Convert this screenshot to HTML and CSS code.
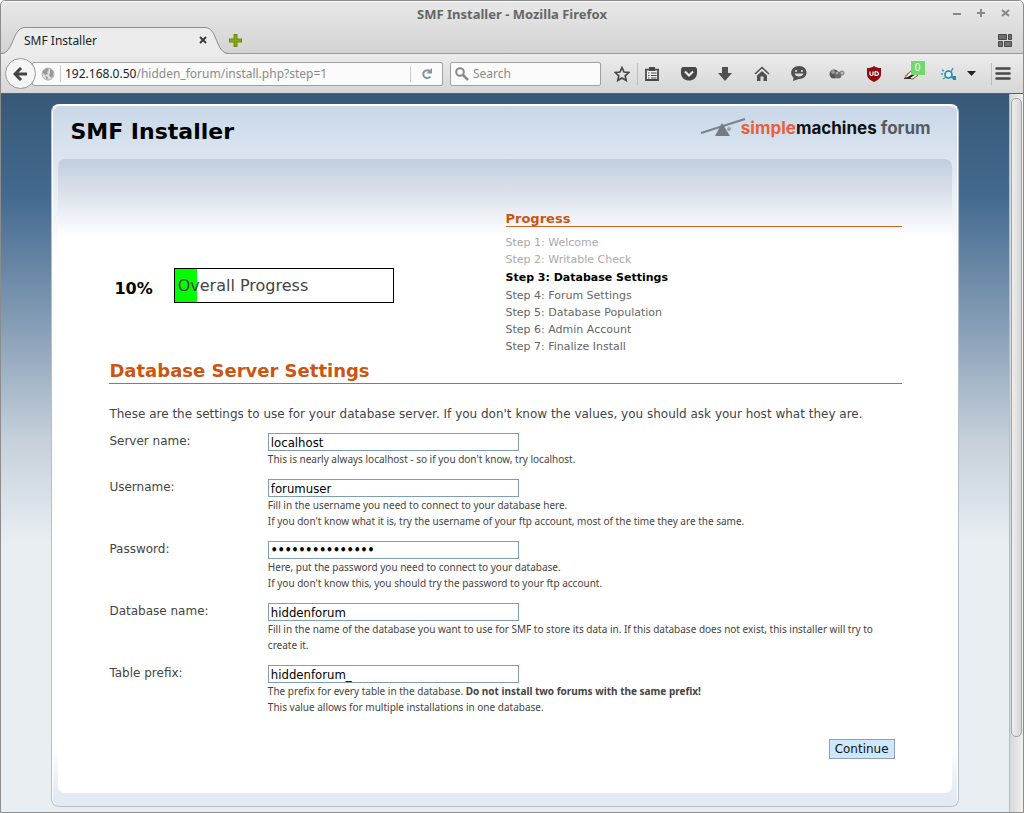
FILE: index.html
```html
<!DOCTYPE html>
<html lang="en">
<head>
<meta charset="utf-8">
<title>SMF Installer</title>
<link rel="stylesheet" href="styles.css">
</head>
<body>
<div class="window">
  <header class="titlebar">
    <div class="caption">SMF Installer - Mozilla Firefox</div>
    <div class="controls">
      <button aria-label="Minimize"><svg width="9" height="9"><path d="M0 5h8" stroke="#888" stroke-width="2"/></svg></button>
      <button aria-label="Maximize"><svg width="9" height="9"><path d="M0 4h8M4 0v8" stroke="#888" stroke-width="2"/></svg></button>
      <button aria-label="Close"><svg width="9" height="9"><path d="M1 1l7 6M8 1L1 7" stroke="#888" stroke-width="2"/></svg></button>
    </div>
  </header>
  <div class="tabs">
    <div class="tab">
      <svg class="tab-shape" width="228" height="28" viewBox="0 0 228 28"><path d="M0 27C13 27 11 1 24 1H204C217 1 214 27 228 27V28H0z" fill="#ececec"/><path d="M0 26.500C13 26.500 11 .5 24 .5H204C217 .5 214 26.500 228 26.500" fill="none" stroke="#8d8d8d"/></svg>
      <span class="tab-title">SMF Installer</span>
      <button class="tab-close" aria-label="Close tab"><svg width="8" height="8"><path d="M1 1l6 6M7 1L1 7" stroke="#3c3c3c" stroke-width="2"/></svg></button>
    </div>
    <button class="tab-new" aria-label="New tab"><svg width="13" height="13"><path d="M6.500 0v13M0 6.500h13" stroke="#6d8a0a" stroke-width="4"/><path d="M6.500 1v11M1 6.500h11" stroke="#86a812" stroke-width="2"/></svg></button>
    <button class="groups" aria-label="Tab groups"><svg width="14" height="13"><path d="M.5.5h8v5h-8zM10.500.5h3v5h-3zM.5 7.500h4v5h-4zM6.500 7.500h7v5h-7z" fill="#707070" stroke="#484848"/></svg></button>
  </div>
  <nav class="toolbar">
    <button class="back" aria-label="Back"><svg width="15" height="14" viewBox="0 0 15 14"><path d="M8 1L2 7l6 6M2 7h12" fill="none" stroke="#444" stroke-width="3"/></svg></button>
    <div class="urlbar">
      <svg width="14" height="14" viewBox="0 0 14 14"><circle cx="7" cy="7" r="6" fill="#dedede" stroke="#aaa"/><path d="M2 4L6 1l2 2-2 2 1 2-3 1-2-2zM9 2l3 2v5l-2 2-2-3 1-2zM4 9l3 1-1 3z" fill="#999"/></svg>
      <div class="address"><b>192.168.0.50</b>/hidden_forum/install.php?step=1</div>
      <button class="reload" aria-label="Reload"><svg width="12" height="12" viewBox="0 0 12 12"><path d="M9 3.200A4 4 0 1 0 9.500 8.500" fill="none" stroke="#8492a0" stroke-width="2"/><path d="M11 0v5.500H5.500z" fill="#8492a0"/></svg></button>
    </div>
    <div class="search">
      <svg width="14" height="14" viewBox="0 0 14 14"><circle cx="5" cy="5" r="3.800" fill="none" stroke="#8a8a8a" stroke-width="2"/><path d="M8 8l5 5" stroke="#8a8a8a" stroke-width="2.500"/></svg>
      <input type="text" placeholder="Search" aria-label="Search">
    </div>
    <div class="tools">
      <button aria-label="Bookmark"><svg width="16" height="16" viewBox="0 0 16 16"><path d="M8 1.500l2 4.500 4.800.5-3.600 3.300 1 4.700L8 12.100l-4.200 2.400 1-4.700L1.200 6.500 6 6z" fill="none" stroke="#484848" stroke-width="1.700"/></svg></button>
      <span class="rule"></span>
      <div class="addons">
        <button aria-label="Bookmarks list"><svg width="14" height="16" viewBox="0 0 14 16"><path d="M1 3.700h12v10.300H1z" fill="#f2f2f2" stroke="#484848" stroke-width="1.800"/><path d="M4 1h6v4H4z" fill="#484848"/><path d="M3 7h1.500M6 7h5.500M3 9.500h1.500M6 9.500h5.500M3 12h1.500M6 12h5.500" stroke="#484848" stroke-width="1.200"/></svg></button>
        <button aria-label="Pocket"><svg width="16" height="14" viewBox="0 0 16 14"><path d="M1.500 0h13L16 1.500V6c0 10-16 10-16 0V1.500z" fill="#484848"/><path d="M4 4.500l4 4 4-4" fill="none" stroke="#eee" stroke-width="2"/></svg></button>
        <button aria-label="Downloads"><svg width="14" height="14" viewBox="0 0 14 14"><path d="M4 0h6v6h4l-7 8-7-8h4z" fill="#505050"/></svg></button>
        <button aria-label="Home"><svg width="16" height="15" viewBox="0 0 16 15"><path d="M1 8l7-6.500L15 8" fill="none" stroke="#505050" stroke-width="1.600"/><path d="M3 9.500l5-4.600 5 4.600V15H9.500v-4.500h-3V15H3z" fill="#505050"/></svg></button>
        <button aria-label="Chat"><svg width="16" height="15" viewBox="0 0 16 15"><path d="M8 0c10 0 10 13 0 13L2 15l.5-3.500C-2.500 7 1 0 8 0z" fill="#505050"/><path d="M5 4v2M11 4v2" stroke="#ddd" stroke-width="1.600"/><path d="M3.500 7.500c1 4 8 4 9 0z" fill="#ddd"/></svg></button>
        <button aria-label="Add-on"><svg width="16" height="12" viewBox="0 0 16 12"><circle cx="5" cy="6" r="4.500" fill="#555"/><circle cx="9" cy="7" r="3.500" fill="#6c6c6c"/><circle cx="4" cy="4" r="2" fill="#999"/><circle cx="8" cy="5" r="1.300" fill="#aaa"/><circle cx="13" cy="5" r="2" fill="#bbb" stroke="#777"/></svg></button>
        <button aria-label="uBlock"><svg width="16" height="16" viewBox="0 0 16 16"><path d="M8 0c2 1.500 4 2 7 2v6c0 4-3 6-7 8-4-2-7-4-7-8V2c3 0 5-.5 7-2z" fill="#900b10"/><path d="M4 5.500v3q1.500 2 3 0v-3M9 5.500v4q4 0 3.500-2T9 5.500" fill="none" stroke="#fff" stroke-width="1.200"/></svg></button>
        <button class="badged" aria-label="Pen add-on"><svg width="16" height="12" viewBox="0 0 16 12"><path d="M1 9.500L8 2l6 5-5 4z" fill="#fff" stroke="#7a4a2a"/><path d="M2 10l8-5 1.500 1.500L6 10z" fill="#222"/><path d="M1 8l8-7" stroke="#ce7b34"/><path d="M0 10.500h7" stroke="#333"/></svg><span class="badge">0</span></button>
        <button aria-label="Molecule add-on"><svg width="16" height="14" viewBox="0 0 16 14"><circle cx="7.500" cy="7.500" r="3.500" fill="#d9f0f5" stroke="#1d87a5" stroke-width="1.600"/><path d="M1 3l2 1M10 5l2-4M2 12l3-2M10 10l2 1M0 7h2" stroke="#37a0ba" stroke-width="1.500"/><path d="M11 9h4v4h-3z" fill="#2688a5"/></svg></button>
      </div>
      <button class="more" aria-label="More"><svg width="9" height="6"><path d="M0 0h9L4.500 5z" fill="#222"/></svg></button>
      <span class="rule"></span>
      <button class="menu" aria-label="Menu"><svg width="16" height="13"><path d="M1.500 1.500h13M1.500 6.500h13M1.500 11.500h13" stroke="#484848" stroke-width="2.500" stroke-linecap="round"/></svg></button>
    </div>
  </nav>
  <div class="viewport">
    <main class="page">
      <div class="card">
        <div class="header">
          <h1>SMF Installer</h1>
          <div class="logo">
            <svg class="seesaw" width="46" height="20" viewBox="0 0 46 20"><path d="M1 15L45 1" stroke="#778393" stroke-width="2"/><path d="M22 5l8 13H15z" fill="#777b80"/><circle cx="29" cy="11" r="2" fill="#98a2ae"/></svg>
            <span class="wordmark"><span class="simple">simple</span>machines <span class="forum">forum</span></span>
          </div>
        </div>
        <div class="panel">
          <div class="overview">
            <div class="overall">
              <strong>10%</strong>
              <div class="meter"><div class="fill" style="width:10%"></div><span>Overall Progress</span></div>
            </div>
            <div class="progress">
              <h3>Progress</h3>
              <ul>
                <li class="done">Step 1: Welcome</li>
                <li class="done">Step 2: Writable Check</li>
                <li class="current">Step 3: Database Settings</li>
                <li>Step 4: Forum Settings</li>
                <li>Step 5: Database Population</li>
                <li>Step 6: Admin Account</li>
                <li>Step 7: Finalize Install</li>
              </ul>
            </div>
          </div>
          <h2>Database Server Settings</h2>
          <form>
            <p class="intro">These are the settings to use for your database server. If you don't know the values, you should ask your host what they are.</p>
            <div class="row"><label for="server">Server name:</label><div><input id="server" type="text" value="localhost"><p>This is nearly always localhost - so if you don't know, try localhost.</p></div></div>
            <div class="row"><label for="user">Username:</label><div><input id="user" type="text" value="forumuser"><p>Fill in the username you need to connect to your database here.<br>If you don't know what it is, try the username of your ftp account, most of the time they are the same.</p></div></div>
            <div class="row"><label for="pass">Password:</label><div><input id="pass" type="password" value="123456789012345"><p>Here, put the password you need to connect to your database.<br>If you don't know this, you should try the password to your ftp account.</p></div></div>
            <div class="row"><label for="db">Database name:</label><div><input id="db" type="text" value="hiddenforum"><p>Fill in the name of the database you want to use for SMF to store its data in. If this database does not exist, this installer will try to create it.</p></div></div>
            <div class="row"><label for="prefix">Table prefix:</label><div><input id="prefix" type="text" value="hiddenforum_"><p>The prefix for every table in the database. <b>Do not install two forums with the same prefix!</b><br>This value allows for multiple installations in one database.</p></div></div>
            <div class="actions"><button class="continue" type="button">Continue</button></div>
          </form>
        </div>
      </div>
    </main>
    <div class="scrollbar"><div class="thumb"></div></div>
  </div>
</div>
</body>
</html>
```
FILE: styles.css
```css
* { box-sizing: border-box; }
body { margin: 0; background: #fff; font-family: "DejaVu Sans", Verdana, sans-serif; color: #444; }
h1, h2, h3, p, ul { margin: 0; padding: 0; }
button { border: 0; padding: 0; background: none; color: inherit; display: flex; align-items: center; }
svg { display: block; flex: none; }

.window { min-height: 100vh; display: flex; flex-direction: column; border: 1px solid #8c8c8c; border-radius: 5px 5px 0 0; overflow: hidden; background: linear-gradient(#e8e8e8, #d3d3d3 52px); font-family: "Noto Sans", sans-serif; }
.titlebar { position: relative; display: flex; align-items: center; justify-content: center; height: 26px; padding-bottom: 2px; border-top: 1px solid #f8f8f8; }
.caption { font-size: 13px; font-weight: bold; color: #666; }
.controls { position: absolute; right: 13px; top: 7px; display: flex; gap: 15px; }

.tabs { display: flex; align-items: center; height: 27px; border-bottom: 1px solid #999; padding-right: 11px; }
.tab { position: relative; display: flex; align-items: center; justify-content: space-between; width: 228px; height: 27px; padding: 0 22px 0 23px; font-size: 12px; color: #222; }
.tab-shape { position: absolute; left: 0; top: 0; }
.tab-title, .tab-close { position: relative; }
.groups { margin-left: auto; }

.toolbar { display: flex; align-items: center; height: 39px; padding: 0 12px 0 4px; background: linear-gradient(#ececec, #d6d6d6); }
.back { z-index: 1; flex: none; justify-content: center; width: 31px; height: 31px; border: 1px solid #999; border-radius: 50%; background: #f5f5f5; }
.urlbar, .search { display: flex; align-items: center; height: 24px; border: 1px solid #a0a0a0; border-radius: 2px; background: #fbfbfb; font-size: 12px; }
.urlbar { flex: 1; margin-left: -4px; padding-left: 8px; color: #8a8a8a; }
.address { flex: 1; margin-left: 5px; padding-left: 4px; border-left: 1px solid #ccc; }
.address b { font-weight: normal; color: #222; }
.reload { justify-content: center; width: 32px; height: 16px; border-left: 1px solid #ccc; }
.search { flex: none; width: 151px; margin-left: 7px; padding-left: 4px; gap: 4px; }
.search input { flex: 1; min-width: 0; border: 0; padding: 0; background: none; font: inherit; }
.search input::placeholder { color: #8a8a8a; opacity: 1; }
.tools { flex: none; display: flex; align-items: center; width: 410px; padding-left: 13px; }
.rule { width: 1px; height: 22px; margin: 0 7px; background: #bcbcbc; }
.addons { flex: 1; display: flex; align-items: center; justify-content: space-between; }
.more { margin: 0 8px 0 10px; }
.menu { margin-left: -4px; }
.badged { position: relative; }
.badge { position: absolute; left: 7px; top: -7px; width: 14px; height: 14px; background: #72d96d; color: #fff; font-size: 10px; line-height: 14px; text-align: center; }

.viewport { flex: 1; display: flex; border-top: 1px solid #4c6070; font-family: "DejaVu Sans", Verdana, sans-serif; background: #e9eef2; }
.page { flex: 1; padding: 10px 0 4px; background: linear-gradient(#375977, #43698f 100px, #8aa1b8 240px, #c5d0da 345px, #e9eef2 450px); }
.scrollbar { width: 14px; padding: 4px 1px; border-left: 1px solid #bbb; background: linear-gradient(90deg, #d8d8d8, #f0f0f0); }
.thumb { height: 90%; border: 1px solid #a3a3a3; border-radius: 5px; background: linear-gradient(90deg, #eee, #d6d6d6); }

.card { width: 90%; margin: 0 auto; padding: 0 5px 13px; border: 1px solid #b4bfcb; border-top: 2px solid #fff; border-radius: 8px; background: linear-gradient(#c9d7e7, #dce6f1 54px, #fff 150px, #fff 640px, #e4eaf3 690px); box-shadow: inset 1px 0 #fff, inset -1px 0 #fff; }
.header { display: flex; justify-content: space-between; height: 53px; padding: 11px 22px 0 13px; }
.header h1 { font-size: 22px; line-height: 30px; color: #000; }
.logo { display: flex; align-items: center; height: 21px; }
.seesaw { margin-right: -5px; }
.wordmark { font-family: Inter, sans-serif; font-weight: bold; font-size: 17px; color: #111; }
.simple { color: #e8603c; }
.forum { color: #555b63; }

.panel { margin: 0 1px; padding: 52px 50px 34px 51px; border-radius: 7px; background: linear-gradient(#c2cedd, #e1e6ef 42px, #fff 76px); }
.overview { display: grid; grid-template-columns: 1fr 1fr; height: 147px; }
.overall { display: flex; align-items: flex-start; gap: 21px; padding: 57px 0 0 5px; }
.overall strong { font-size: 16px; line-height: 42px; color: #000; }
.meter { position: relative; width: 220px; height: 35px; border: 1px solid #000; background: #fff; font-size: 16px; line-height: 33px; padding-left: 3px; }
.meter span { position: relative; }
.fill { position: absolute; left: 0; top: 0; bottom: 0; background: #0f0; }
h2, h3 { color: #cc5511; border-bottom: 1px solid #cc6622; }
h3 { font-size: 13px; line-height: 15px; }
.progress ul { list-style: none; margin-top: 7px; font-size: 11px; line-height: 17px; color: #666; }
.progress .done { color: #aaa; }
.progress .current { color: #000; font-weight: bold; line-height: 19px; }
h2 { font-size: 18px; line-height: 25px; }

form { font-size: 12px; }
.intro { margin-top: 22px; margin-bottom: 11px; line-height: 16px; }
.row { display: grid; grid-template-columns: 20% 1fr; margin-bottom: 12px; line-height: 16px; }
.row input { display: block; width: 251px; height: 18px; padding: 0 2px; border: 1px solid #7f9db9; background: #fff; color: #000; font-family: "DejaVu Sans Condensed", "DejaVu Sans", sans-serif; font-size: 13px; }
.row input[type="password"] { font-size: 12px; font-weight: bold; }
.row p { font-family: "Noto Sans", sans-serif; font-size: 10px; line-height: 16px; }
.actions { display: flex; justify-content: flex-end; padding: 12px 7px 0 0; }
.continue { height: 20px; padding: 0 5px; border: 1px solid #8f9fae; background: #cde7ff; color: #111; font-family: "DejaVu Sans", sans-serif; font-size: 12px; }
```
